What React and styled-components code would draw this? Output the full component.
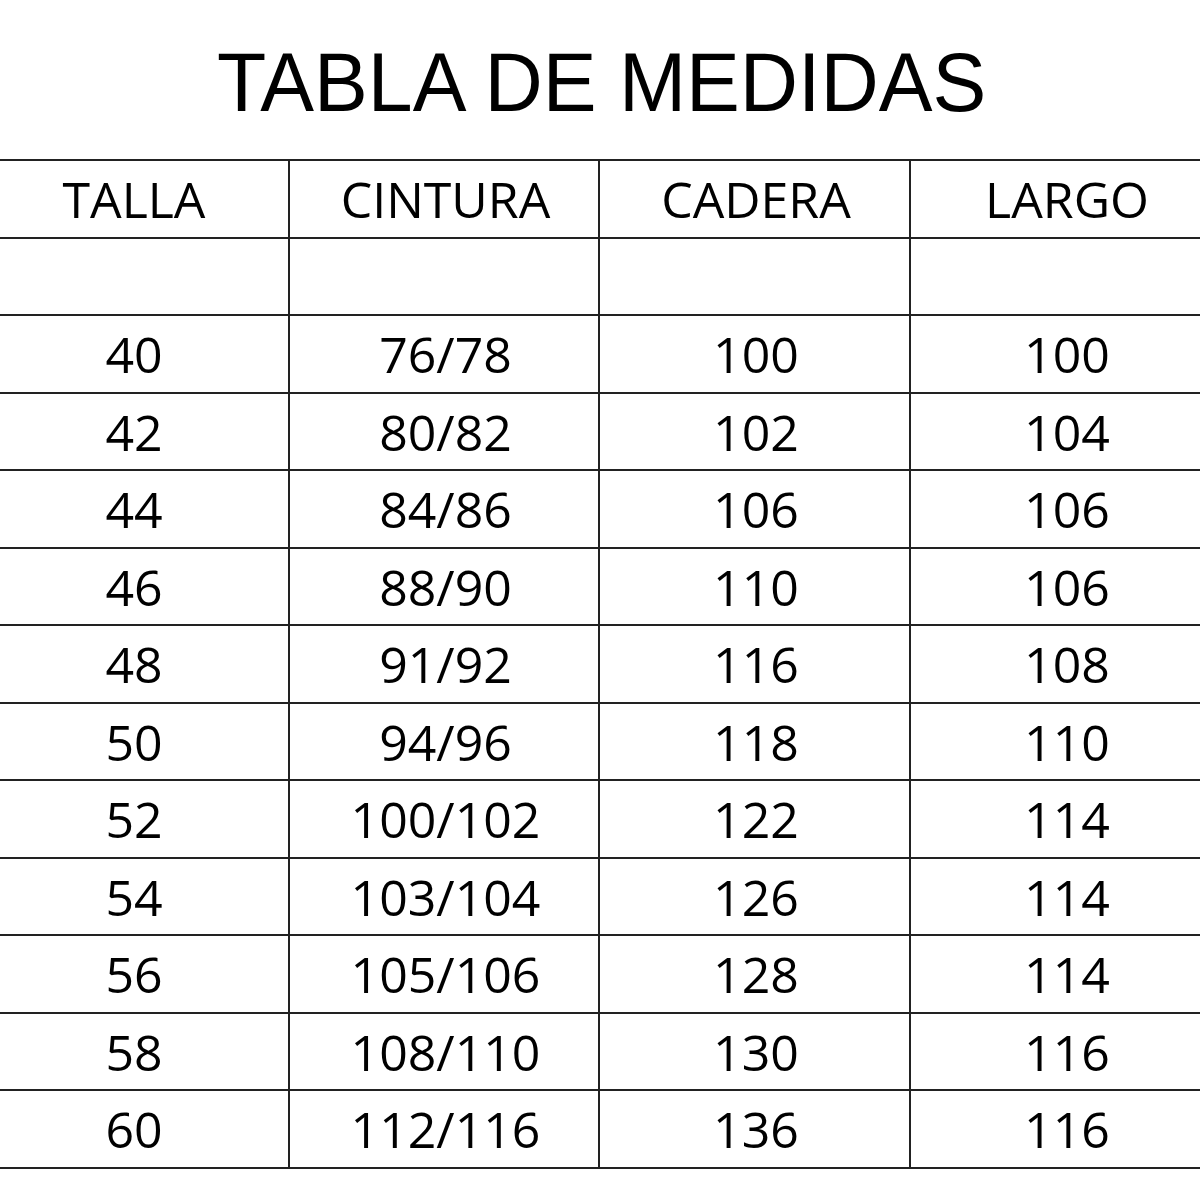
import styled, { createGlobalStyle } from 'styled-components';

const GlobalStyle = createGlobalStyle`
  html, body {
    margin: 0;
    padding: 0;
    background: #ffffff;
    overflow: hidden;
  }
`;

const Page = styled.div`
  width: 1200px;
  height: 1200px;
  overflow: hidden;
  background: #fff;
`;

const Title = styled.h1`
  margin: 0;
  height: 159px;
  display: flex;
  justify-content: center;
  align-items: flex-start;
  padding-top: 40px;
  box-sizing: border-box;
  font-family: "Liberation Sans", Arial, sans-serif;
  font-weight: 400;
  font-size: 84px;
  line-height: 1;
  color: #000;
`;

const TitleText = styled.span`
  display: inline-block;
  transform: scaleX(0.96);
  margin-left: 4px;
`;

const Grid = styled.div`
  display: grid;
  grid-template-columns: 311px 310px 311px 311px;
  grid-auto-rows: 77.5px;
  margin-left: -23px;
  width: 1243px;
  border-top: 2px solid #222;
`;

const Cell = styled.div`
  display: flex;
  align-items: center;
  justify-content: center;
  border-bottom: 2px solid #222;
  border-left: ${(p) => (p.first ? 'none' : '2px solid #222')};
  font-family: "Open Sans", "Noto Sans", sans-serif;
  font-size: 50px;
  color: #000;
  padding-top: 1px;
  padding-left: 3px;
`;

const headers = ['TALLA', 'CINTURA', 'CADERA', 'LARGO'];

const rows = [
  ['', '', '', ''],
  ['40', '76/78', '100', '100'],
  ['42', '80/82', '102', '104'],
  ['44', '84/86', '106', '106'],
  ['46', '88/90', '110', '106'],
  ['48', '91/92', '116', '108'],
  ['50', '94/96', '118', '110'],
  ['52', '100/102', '122', '114'],
  ['54', '103/104', '126', '114'],
  ['56', '105/106', '128', '114'],
  ['58', '108/110', '130', '116'],
  ['60', '112/116', '136', '116'],
];

export default function App() {
  return (
    <Page>
      <GlobalStyle />
      <Title>
        <TitleText>TABLA DE MEDIDAS</TitleText>
      </Title>
      <Grid>
        {headers.map((h, i) => (
          <Cell key={h} first={i === 0}>{h}</Cell>
        ))}
        {rows.map((r, ri) =>
          r.map((v, ci) => (
            <Cell key={`${ri}-${ci}`} first={ci === 0}>{v}</Cell>
          ))
        )}
      </Grid>
    </Page>
  );
}
